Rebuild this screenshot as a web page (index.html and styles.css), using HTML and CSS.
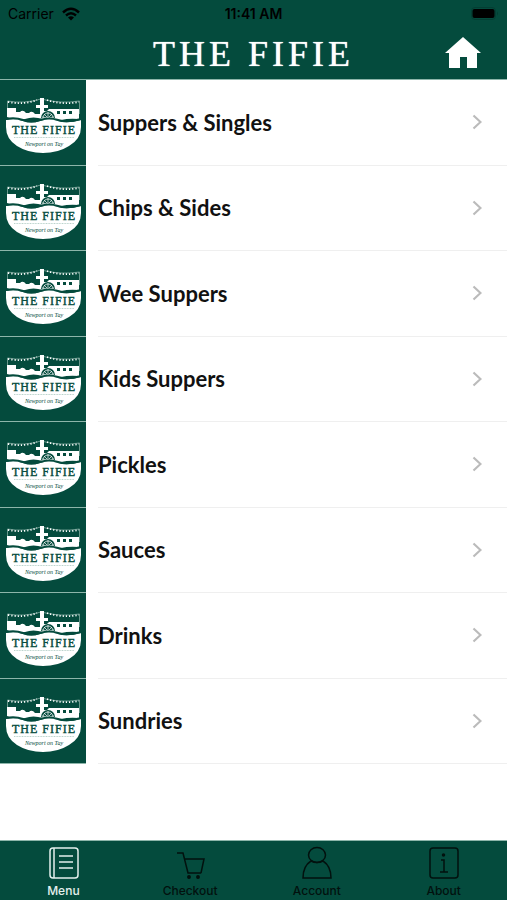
FILE: index.html
```html
<!DOCTYPE html>
<html lang="en">
<head>
  <meta charset="UTF-8" />
  <meta name="viewport" content="width=device-width, initial-scale=1.0"/>
  <title>The Fifie - Menu</title>
  <link rel="stylesheet" href="styles.css">
</head>
<body>

  <!-- Shared logo -->
  <svg class="sprite" aria-hidden="true">
    <symbol id="logo" viewBox="0 0 86 84">
      <!-- Bunting -->
      <path d="M7.500 34V21Q24 24 41 19Q60 24 79.500 21V34" fill="none" stroke="#a9c9c0" stroke-width=".6"/>
      <path d="M8 22Q24 25 37 20M47 20Q62 25 79 22" fill="none" stroke="#fff" stroke-width="1.800" stroke-dasharray="1.200 2"/>
      <!-- Deck and mast -->
      <path d="M7 28h9v4h4q3-3 6 1h3q3-3 6 1h5v-6h-4v-3h4v-7h4v7h4v3h-4v3h3l2-2h30v10q-10-1-18 1t-18-1-18 0-18-2z" fill="#fff"/>
      <path d="M57 31h3v3h-3zM63 31h3v3h-3zM69 31h3v3h-3z" fill="#044b3d"/>
      <!-- Paddle wheel -->
      <path d="M41 38a7 7 0 0 1 14 0z" fill="#044b3d"/>
      <path d="M43 38a5 5 0 0 1 10 0M48 38v-6M48 38l-4-4M48 38l4-4M48 38l-6-1M48 38l6-1" fill="none" stroke="#fff" stroke-width=".7"/>
      <!-- Hull -->
      <path d="M6 40q9-2 17 1t17 0 18 0 23-1v7q0 12-12 19-11 7-26 7t-26-7Q6 59 6 47z" fill="#fff"/>
      <path d="M6 39q9-2 17 1t17 0 18 0 23-1" fill="none" stroke="#044b3d" stroke-width="2"/>
      <text x="44" y="54" stroke-width=".4" class="logo-name">THE FIFIE</text>
      <path d="M14 57.500h60" stroke="#8db5aa" stroke-width=".6" stroke-dasharray="1 .6"/>
      <text x="44" y="66" class="logo-place">Newport on Tay</text>
    </symbol>
    <symbol id="chevron" viewBox="0 0 10 16">
      <path d="M1.500 1.500L8.500 8l-7 6.500" fill="none" stroke="#bbb" stroke-width="2.200"/>
    </symbol>
  </svg>

  <header>
    <div class="status-bar">
      <div class="carrier">
        <span>Carrier</span>
        <svg width="18" height="14" viewBox="0 0 18 14" fill="none" stroke="#000" stroke-width="2.400">
          <path d="M1 5.500q8-7.500 16 0M4 8.500q5-4.500 10 0"/>
          <path d="M6 10.500q3-2.500 6 0L9 13.500z" fill="#000" stroke="none"/>
        </svg>
      </div>
      <time>11:41 AM</time>
      <svg class="battery" width="28" height="13" viewBox="0 0 28 13">
        <rect x=".5" y=".5" width="24" height="12" rx="3.500" fill="none" stroke="#043e33"/>
        <rect x="1.500" y="2" width="22" height="9" rx="2"/>
        <path d="M26 4.500q2 2 0 4z" fill="#043e33"/>
      </svg>
    </div>
    <div class="title-bar">
      <h1>THE FIFIE</h1>
      <a href="#" class="home" aria-label="Home">
        <svg width="36" height="32" viewBox="0 0 36 32" fill="#fff">
          <path d="M18 0l18 16h-4v15H22V20h-7v11H4V16H0z"/>
        </svg>
      </a>
    </div>
  </header>

  <main>
    <ul class="menu-list">
      <li><a href="#"><span class="thumb"><svg><use href="#logo"/></svg></span><span class="item">Suppers &amp; Singles<svg class="chevron"><use href="#chevron"/></svg></span></a></li>
      <li><a href="#"><span class="thumb"><svg><use href="#logo"/></svg></span><span class="item">Chips &amp; Sides<svg class="chevron"><use href="#chevron"/></svg></span></a></li>
      <li><a href="#"><span class="thumb"><svg><use href="#logo"/></svg></span><span class="item">Wee Suppers<svg class="chevron"><use href="#chevron"/></svg></span></a></li>
      <li><a href="#"><span class="thumb"><svg><use href="#logo"/></svg></span><span class="item">Kids Suppers<svg class="chevron"><use href="#chevron"/></svg></span></a></li>
      <li><a href="#"><span class="thumb"><svg><use href="#logo"/></svg></span><span class="item">Pickles<svg class="chevron"><use href="#chevron"/></svg></span></a></li>
      <li><a href="#"><span class="thumb"><svg><use href="#logo"/></svg></span><span class="item">Sauces<svg class="chevron"><use href="#chevron"/></svg></span></a></li>
      <li><a href="#"><span class="thumb"><svg><use href="#logo"/></svg></span><span class="item">Drinks<svg class="chevron"><use href="#chevron"/></svg></span></a></li>
      <li><a href="#"><span class="thumb"><svg><use href="#logo"/></svg></span><span class="item">Sundries<svg class="chevron"><use href="#chevron"/></svg></span></a></li>
    </ul>
  </main>

  <nav class="tab-bar">
    <a href="#" class="tab active">
      <svg viewBox="0 0 32 32">
        <rect x="3" y="1" width="28" height="30" rx="3"/>
        <path d="M7 1v30M12 9h14M12 15h14M12 21h14"/>
      </svg>
      Menu
    </a>
    <a href="#" class="tab">
      <svg viewBox="0 0 32 32">
        <path d="M3 6h6l5 20h13M10 12h20l-3 14"/>
        <circle cx="15" cy="30" r="1.200" fill="currentColor"/>
        <circle cx="24" cy="30" r="1.200" fill="currentColor"/>
      </svg>
      Checkout
    </a>
    <a href="#" class="tab">
      <svg viewBox="0 0 32 32">
        <ellipse cx="16" cy="8" rx="8.500" ry="7.500"/>
        <path d="M10 14Q2 19 2 31h28q0-12-8-17Q16 17 10 14"/>
      </svg>
      Account
    </a>
    <a href="#" class="tab">
      <svg viewBox="0 0 32 32">
        <rect x="2" y="1" width="28" height="30" rx="3"/>
        <path d="M13 13h3v12M12 25h8"/>
        <circle cx="15.500" cy="8" r="1" fill="currentColor"/>
      </svg>
      About
    </a>
  </nav>

</body>
</html>
```
FILE: styles.css
```css
* {
  margin: 0;
  padding: 0;
  box-sizing: border-box;
}

body {
  display: flex;
  flex-direction: column;
  min-height: 100vh;
  background-color: #ffffff;
  font-family: 'Inter', sans-serif;
}

a {
  color: inherit;
  text-decoration: none;
}

.sprite {
  display: none;
}

header {
  background-color: #044b3d;
  border-bottom: 1px solid #8db5aa;
}

.status-bar {
  display: grid;
  grid-template-columns: 1fr auto 1fr;
  align-items: center;
  height: 27px;
  padding: 0 8px;
  font-size: 14px;
}

.carrier {
  display: flex;
  align-items: center;
  gap: 8px;
}

.status-bar time {
  font-weight: 600;
}

.battery {
  justify-self: end;
}

.title-bar {
  display: grid;
  grid-template-columns: 1fr auto 1fr;
  align-items: center;
  height: 52px;
  padding: 0 26px;
}

h1 {
  grid-column: 2;
  padding-top: 2px;
  font-family: 'Liberation Serif', serif;
  font-size: 36px;
  font-weight: 400;
  line-height: 40px;
  letter-spacing: 4px;
  color: #ffffff;
  text-shadow: 0 0 1px #ffffff;
}

.home {
  justify-self: end;
}

.home svg {
  display: block;
}

main {
  display: flex;
  flex: 1;
  padding-bottom: 76px;
}

.menu-list {
  display: grid;
  flex: 1;
  grid-auto-rows: 1fr;
  list-style: none;
}

.menu-list a {
  display: flex;
  height: 100%;
}

.thumb {
  background-color: #044b3d;
  border-bottom: 1px solid #8db5aa;
}

.thumb svg {
  display: block;
  width: 86px;
  height: 84px;
}

.logo-name {
  font-family: 'Liberation Serif', serif;
  font-size: 12px;
  letter-spacing: 1px;
  text-anchor: middle;
  fill: #044b3d;
  stroke: #044b3d;
}

.logo-place {
  font-family: 'Liberation Serif', serif;
  font-size: 6px;
  font-style: italic;
  text-anchor: middle;
  fill: #044b3d;
}

.item {
  display: flex;
  flex: 1;
  align-items: center;
  justify-content: space-between;
  margin-left: 12px;
  padding-right: 25px;
  border-bottom: 1px solid #efefef;
  font-family: 'Lato', sans-serif;
  font-size: 22px;
  font-weight: 700;
  color: #111111;
}

.chevron {
  width: 10px;
  height: 16px;
}

.tab-bar {
  display: flex;
  height: 60px;
  background-color: #044b3d;
  border-top: 1px solid #8db5aa;
}

.tab {
  display: flex;
  flex: 1;
  flex-direction: column;
  align-items: center;
  padding-top: 6px;
  font-size: 12px;
  line-height: 16px;
  font-weight: 500;
  color: #02110e;
}

.tab.active {
  color: #e4f0ed;
}

.tab svg {
  width: 32px;
  height: 32px;
  margin-bottom: 4px;
  overflow: visible;
  fill: none;
  stroke: currentColor;
  stroke-width: 1.5px;
}
```
